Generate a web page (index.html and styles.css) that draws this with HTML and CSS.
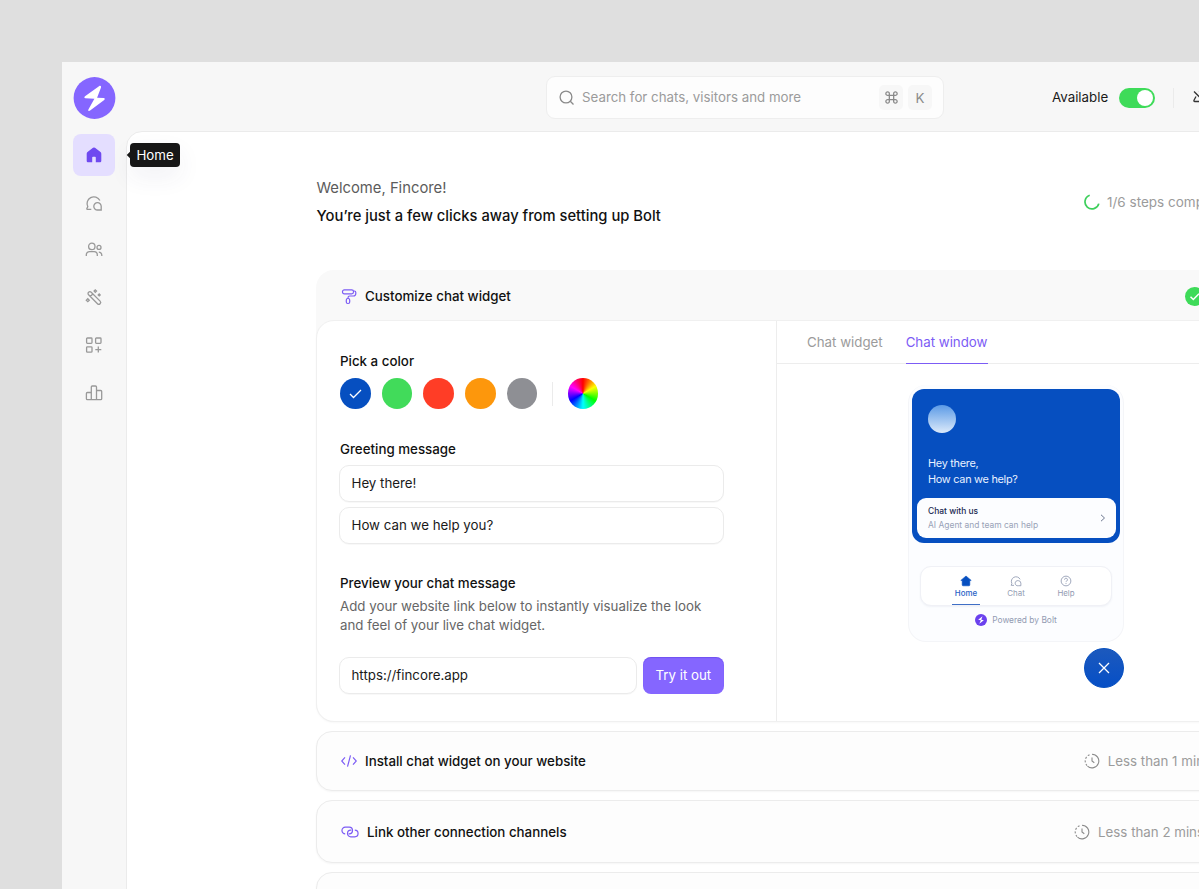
FILE: index.html
```html
<!DOCTYPE html>
<html lang="en">
<head>
<meta charset="UTF-8">
<title>Bolt - Home</title>
<link rel="stylesheet" href="styles.css">
</head>
<body>
<div class="app">
  <header class="topbar">
    <div class="logo">
      <svg width="43" height="42" viewBox="0 0 43 42"><circle cx="21.500" cy="21" r="20.900" fill="#8566ff"/><path d="M26 9.200 12 19.300c-1 .8-.8 1.900.4 2l9 .5-6 10.600c-.6 1.400.5 2 1.700 1.100L31.200 23c1-.8.7-1.900-.5-2l-6.600-.3 3.900-10.200c.4-1.500-.6-2.300-2-1.300z" fill="#fff"/></svg>
    </div>
    <div class="search">
      <svg class="search-icon" width="16" height="16" viewBox="0 0 16 16"><circle cx="7" cy="7" r="5.900"/><path d="M11.300 11.300 14.500 14.500"/></svg>
      <span class="search-text">Search for chats, visitors and more</span>
      <span class="key">
        <svg width="13" height="13" viewBox="0 0 12 12"><path d="M4 4h4v4H4zM4 4V2.500A1.600 1.600 0 1 0 2.500 4H4M8 4V2.500A1.600 1.600 0 1 1 9.500 4H8M4 8v1.500A1.600 1.600 0 1 1 2.500 8H4M8 8v1.500A1.600 1.600 0 1 0 9.500 8H8"/></svg>
      </span>
      <span class="key">K</span>
    </div>
    <div class="status">
      <span class="status-text">Available</span>
      <span class="toggle"><i></i></span>
      <span class="status-line"></span>
      <svg class="bell" width="18" height="18" viewBox="0 0 18 18"><path d="M2 2.500 15.500 16M4 7.500 2 11.200c-.3.800 0 1.300.8 1.300h9M7 3.200c3-1.700 7 .3 7 4.300 0 2 .5 3 1.500 4.500"/></svg>
    </div>
  </header>

  <div class="body">
    <nav class="sidebar">
      <a class="nav-item active">
        <svg width="16" height="16" viewBox="0 0 16 16"><path d="M7 .8a1.700 1.700 0 0 1 2 0l5.500 4.300c.5.400.8 1 .8 1.600V14a1.200 1.200 0 0 1-1.200 1.200h-4.300V10.500a.8.800 0 0 0-.8-.8H7a.8.800 0 0 0-.8.800v4.700H1.900A1.200 1.200 0 0 1 .7 14V6.700c0-.6.300-1.200.8-1.600z" fill="#6f49f0"/></svg>
        <span class="tooltip">Home</span>
      </a>
      <a class="nav-item">
        <svg width="18" height="18" viewBox="0 0 18 18"><path d="M6.300 15.300H2.300c-.5 0-.7-.5-.4-.9l.9-1.600A6.800 6.800 0 1 1 14.900 6.500"/><path d="M12.500 8.600a3.700 3.700 0 1 0 0 7.400h3.700v-3.700a3.700 3.700 0 0 0-3.700-3.700z"/></svg>
      </a>
      <a class="nav-item">
        <svg width="18" height="18" viewBox="0 0 18 18"><circle cx="6.800" cy="5.400" r="3.200"/><path d="M1.300 15v-1.200a3.200 3.200 0 0 1 3.200-3.200h4.600a3.200 3.200 0 0 1 3.200 3.200V15"/><circle cx="14" cy="6.400" r="2"/><path d="M13.800 11.200a3 3 0 0 1 3 3V15"/></svg>
      </a>
      <a class="nav-item">
        <svg width="18" height="18" viewBox="0 0 18 18"><path d="m3.600 3.200a1.800 1.800 0 0 1 2.600 0l8.900 8.900a1.800 1.800 0 0 1-2.600 2.600L3.600 5.800a1.800 1.800 0 0 1 0-2.600zM5.300 7.500l2.500-2.500"/><path d="m10.300.9 1.200 1.200-1.200 1.200-1.200-1.200zM14.200 4.900l1 1-1 1-1-1zM2.800 9.700l1.500 1.500-1.500 1.500-1.500-1.500z"/></svg>
      </a>
      <a class="nav-item">
        <svg width="18" height="18" viewBox="0 0 18 18"><rect x="1.600" y="2" width="5.400" height="5.400" rx=".8"/><rect x="10.600" y="2" width="5.400" height="5.400" rx=".8"/><rect x="1.600" y="10.800" width="5.400" height="5.400" rx=".8"/><path d="M13.300 10.600v6M10.300 13.600h6"/></svg>
      </a>
      <a class="nav-item">
        <svg width="18" height="18" viewBox="0 0 18 18"><path d="M6.300 15.700V3a1 1 0 0 1 1-1h3.200a1 1 0 0 1 1 1v12.700M6.300 8.500H2.400a1 1 0 0 0-1 1v5.200a1 1 0 0 0 1 1h13.300a1 1 0 0 0 1-1V7.500a1 1 0 0 0-1-1h-4.200"/></svg>
      </a>
    </nav>

    <main class="content">
      <div class="welcome">
        <div>
          <p class="hello">Welcome, Fincore!</p>
          <h1>You’re just a few clicks away from setting up Bolt</h1>
        </div>
        <div class="progress">
          <svg width="16" height="16" viewBox="0 0 16 16"><path d="M5.700 1.300A7 7 0 1 0 14.800 9.600"/></svg>
          <span>1/6 steps completed</span>
        </div>
      </div>

      <section class="step-open">
        <div class="step-head">
          <svg class="step-icon" width="16" height="17" viewBox="0 0 16 17"><rect x="1.500" y="1.800" width="11" height="4" rx="1.800"/><path d="M12.500 3h.8a1.500 1.500 0 0 1 1.500 1.500v1A2.500 2.500 0 0 1 12.300 8H8.800A1.800 1.800 0 0 0 7 9.800v.7"/><rect x="5.300" y="10.500" width="3.400" height="5" rx="1.500"/></svg>
          <h2>Customize chat widget</h2>
          <svg class="done" width="19" height="19" viewBox="0 0 19 19"><circle cx="9.500" cy="9.500" r="9.500" fill="#3edb59"/><path d="m5.500 9.800 2.800 2.700L14 6.800" fill="none" stroke="#fff" stroke-width="1.500"/></svg>
        </div>
        <div class="panel">
          <div class="form">
            <h3>Pick a color</h3>
            <div class="colors">
              <span class="dot blue"><svg width="13" height="10" viewBox="0 0 13 10"><path d="m1 5 3.500 3.500L12 1"/></svg></span>
              <span class="dot green"></span>
              <span class="dot red"></span>
              <span class="dot orange"></span>
              <span class="dot gray"></span>
              <span class="colors-line"></span>
              <span class="dot wheel"></span>
            </div>
            <h3 class="label-greeting">Greeting message</h3>
            <div class="input">Hey there!</div>
            <div class="input">How can we help you?</div>
            <h3 class="label-preview">Preview your chat message</h3>
            <p class="hint">Add your website link below to instantly visualize the look<br>and feel of your live chat widget.</p>
            <div class="link-row">
              <div class="input">https://fincore.app</div>
              <div class="button">Try it out</div>
            </div>
          </div>

          <div class="preview">
            <div class="tabs">
              <span class="tab">Chat widget</span>
              <span class="tab selected">Chat window</span>
            </div>
            <div class="widget">
              <div class="hero">
                <div class="avatar"></div>
                <p>Hey there,</p>
                <p>How can we help?</p>
                <div class="chat-card">
                  <div>
                    <strong>Chat with us</strong>
                    <span>AI Agent and team can help</span>
                  </div>
                  <svg width="6" height="8" viewBox="0 0 6 8"><path d="m1 .8 3.500 3.200L1 7.200"/></svg>
                </div>
              </div>
              <div class="widget-nav">
                <div class="widget-tab on">
                  <svg width="12" height="12" viewBox="0 0 12 12"><path d="M6 1 .8 5.400h1.400V10c0 .5.300.8.800.8h6c.5 0 .8-.3.800-.8V5.400h1.400z" fill="#064fc0" stroke="#064fc0" stroke-width=".6"/></svg>
                  Home
                </div>
                <div class="widget-tab">
                  <svg width="12" height="12" viewBox="0 0 18 18"><path d="M6 15.500H1.800l1-2.700A6.800 6.800 0 1 1 15.200 6.500"/><path d="M12.500 8.500a3.900 3.900 0 1 0 0 7.600h3.800v-3.900a3.900 3.900 0 0 0-3.800-3.700z"/></svg>
                  Chat
                </div>
                <div class="widget-tab">
                  <svg width="12" height="12" viewBox="0 0 18 18"><circle cx="9" cy="9" r="7.300"/><path d="M6.800 7a2.200 2.200 0 1 1 3.200 2c-.7.400-1 .8-1 1.600M9 12.200v1.300"/></svg>
                  Help
                </div>
              </div>
              <div class="powered">
                <svg width="12" height="12" viewBox="0 0 42 42"><circle cx="21" cy="21" r="21" fill="#6b41ee"/><path d="M26.300 8.200 11 20.500l9.500 1.700L15 34l16-12.500-9-1.700z" fill="#fff"/></svg>
                Powered by Bolt
              </div>
            </div>
            <div class="close">
              <svg width="12" height="12" viewBox="0 0 12 12"><path d="m1 1 10 10M11 1 1 11"/></svg>
            </div>
          </div>
        </div>
      </section>

      <section class="step">
        <svg class="step-icon" width="16" height="16" viewBox="0 0 16 16"><path d="M4 4.300.7 8 4 11.700M12 4.300 15.300 8 12 11.700M9.500 2.300l-3 11.400"/></svg>
        <h2>Install chat widget on your website</h2>
        <div class="time">
          <svg width="16" height="16" viewBox="0 0 16 16"><path d="M8 1.200a6.800 6.800 0 1 1-4.500 11.900M8 4.500V8l2.300 1.700"/><path d="M5.500 1.700A6.800 6.800 0 0 0 3 12.600" stroke-dasharray="2 1.700"/></svg>
          <span>Less than 1 min</span>
        </div>
      </section>

      <section class="step step-link">
        <svg class="step-icon" width="18" height="12" viewBox="0 0 18 12"><path d="M4.200 7.800A3.300 3.300 0 0 1 4.300 1.200h3.900a3.300 3.300 0 0 1 0 6.600H7.600"/><path d="M13.800 4.200a3.300 3.300 0 0 1-.1 6.600H9.800a3.300 3.300 0 0 1 0-6.600h.6"/></svg>
        <h2>Link other connection channels</h2>
        <div class="time">
          <svg width="16" height="16" viewBox="0 0 16 16"><path d="M8 1.200a6.800 6.800 0 1 1-4.500 11.900M8 4.500V8l2.300 1.700"/><path d="M5.500 1.700A6.800 6.800 0 0 0 3 12.600" stroke-dasharray="2 1.700"/></svg>
          <span>Less than 2 mins</span>
        </div>
      </section>

      <section class="step"></section>
    </main>
  </div>
</div>
</body>
</html>
```

FILE: styles.css
```css
* {
  box-sizing: border-box;
}

html {
  overflow: hidden;
}

body {
  margin: 0;
  padding: 62px 0 0 62px;
  height: 889px;
  overflow: hidden;
  background-color: #dfdfdf;
  color: #1a1a1a;
  font-family: Inter, "Liberation Sans", sans-serif;
  font-size: 13.3px;
}

h1, h2, h3, p {
  margin: 0;
}

svg {
  display: block;
  flex: none;
  fill: none;
}

.app {
  width: 1364px;
  height: 827px;
  overflow: hidden;
  background-color: #f7f7f7;
}

/* top bar */
.topbar {
  display: flex;
  height: 69px;
  padding-top: 14px;
}

.logo {
  margin: 1px 0 0 11px;
}

.search {
  display: flex;
  align-items: center;
  width: 398px;
  height: 43px;
  margin-left: 430px;
  padding: 0 12px;
  background-color: #fdfdfd;
  border: 1px solid #eeeeee;
  border-radius: 9px;
}

.search-icon {
  stroke: #8a8a8a;
  stroke-width: 1.3;
}

.search-text {
  flex: 1;
  margin-left: 7px;
  color: #9b9b9b;
  line-height: 16px;
  padding-bottom: 1px;
}

.key {
  display: flex;
  align-items: center;
  justify-content: center;
  width: 24px;
  height: 25px;
  margin-left: 5px;
  background-color: #f7f7f7;
  border-radius: 5px;
  color: #8a8a8a;
}

.key:last-child {
  margin-right: -1px;
}

.key svg {
  stroke: #8a8a8a;
  stroke-width: 1.2;
}

.status {
  display: flex;
  align-items: center;
  height: 43px;
  margin-left: 108px;
}

.status-text {
  width: 67px;
  padding-bottom: 1px;
}

.toggle {
  display: flex;
  justify-content: flex-end;
  width: 36px;
  height: 20px;
  padding: 2px;
  background-color: #3edb59;
  border-radius: 10px;
}

.toggle i {
  width: 16px;
  height: 16px;
  background-color: #fff;
  border-radius: 50%;
}

.status-line {
  width: 1px;
  height: 20px;
  margin-left: 18px;
  background-color: #ebebeb;
}

.bell {
  margin-left: 18px;
  stroke: #333;
  stroke-width: 1.3;
}

.body {
  display: flex;
}

/* sidebar */
.sidebar {
  display: flex;
  flex-direction: column;
  gap: 5.5px;
  width: 64px;
  padding: 3px 0 0 11.4px;
}

.nav-item {
  position: relative;
  display: flex;
  align-items: center;
  justify-content: center;
  width: 42px;
  height: 42px;
  border-radius: 8px;
}

.nav-item > svg {
  stroke: #999;
  stroke-width: 1.3;
}

.nav-item.active {
  background-color: #e4deff;
}

.nav-item.active > svg {
  stroke: none;
}

.tooltip {
  position: absolute;
  left: 57px;
  top: 9px;
  z-index: 1;
  height: 24px;
  padding: 0 6px;
  background-color: #171717;
  border-radius: 4px;
  box-shadow: 0 10px 24px rgba(60,50,120,0.07);
  color: #fff;
  line-height: 24px;
}

.tooltip::before {
  content: "";
  position: absolute;
  left: -2px;
  top: 9px;
  width: 6px;
  height: 6px;
  background-color: #171717;
  transform: rotate(45deg);
}

/* content */
.content {
  flex: 1;
  height: 830px;
  padding: 47px 190px 0 189px;
  background-color: #fff;
  border: 1px solid #ebebeb;
  border-radius: 16px 0 0 0;
}

.welcome {
  display: flex;
  justify-content: space-between;
  height: 91px;
}

.hello {
  margin-left: 0.5px;
  font-size: 14.8px;
  line-height: 18px;
  color: #5c5c5c;
}

h1 {
  margin: 9px 0 0 0.5px;
  font-size: 14.75px;
  font-weight: 500;
  line-height: 20px;
  color: #111;
}

.progress {
  display: flex;
  align-items: center;
  gap: 7px;
  width: 151px;
  height: 20px;
  margin-top: 13px;
  font-size: 13.5px;
  color: #9b9b9b;
  white-space: nowrap;
}

.progress svg {
  stroke: #3ecf5c;
  stroke-width: 1.7;
}

h2, h3 {
  font-size: 13.33px;
  font-weight: 500;
  line-height: 18px;
  color: #111;
}

.step-open {
  background-color: #f9f9f9;
  border-radius: 18px;
}

.step-head {
  display: flex;
  align-items: center;
  height: 50px;
  padding: 2px 0 0 25px;
}

.step-icon {
  margin-right: 8px;
  stroke: #7c5cf5;
  stroke-width: 1.2;
}

.done {
  margin-left: auto;
  margin-right: 31px;
}

.panel {
  display: flex;
  height: 402px;
  background-color: #fff;
  border: 1px solid #f0f0f0;
  border-radius: 18px;
  box-shadow: 0 1px 2px rgba(0,0,0,0.03);
}

.form {
  width: 460px;
  padding: 31px 52px 0 23px;
  border-right: 1px solid #ededed;
}

.colors {
  display: flex;
  align-items: center;
  gap: 11.1px;
  margin-top: 8px;
}

.dot {
  display: flex;
  align-items: center;
  justify-content: center;
  width: 30.6px;
  height: 31px;
  border-radius: 50%;
}

.dot svg {
  stroke: #fff;
  stroke-width: 1.3;
}

.blue { background-color: #064fc0; }
.green { background-color: #41db5a; }
.red { background-color: #ff3d26; }
.orange { background-color: #fd970c; }
.gray { background-color: #8e8f94; }
.wheel { background: conic-gradient(red, yellow, lime, cyan, blue, magenta, red); }

.colors-line {
  width: 1px;
  height: 24px;
  margin: 0 3.5px;
  background-color: #ebebeb;
}

.label-greeting {
  margin: 31px 0 7px;
}

.input {
  height: 37px;
  margin: 0 0 5px -1px;
  padding-left: 11.5px;
  background-color: #fff;
  border: 1px solid #ebebeb;
  border-radius: 10px;
  box-shadow: 0 1px 1px rgba(0,0,0,0.03);
  line-height: 35px;
}

.label-preview {
  margin-top: 30px;
}

.hint {
  margin-top: 5px;
  line-height: 19px;
  color: #666;
  white-space: nowrap;
}

.link-row {
  display: flex;
  gap: 6px;
  margin-top: 22px;
}

.link-row .input {
  flex: 1;
}

.button {
  width: 81.4px;
  height: 37px;
  background-color: #8566ff;
  border-radius: 8px;
  box-shadow: inset 0 1px 1px rgba(80,50,220,0.4);
  color: #fff;
  line-height: 36px;
  text-align: center;
}

/* preview */
.preview {
  flex: 1;
  display: flex;
  flex-direction: column;
}

.tabs {
  display: flex;
  gap: 23px;
  height: 43px;
  padding-left: 30px;
  border-bottom: 1px solid #ededed;
}

.tab {
  height: 43px;
  line-height: 42px;
  color: #9b9b9b;
}

.tab.selected {
  border-bottom: 1px solid #7c5cf5;
  color: #7c5cf5;
}

.widget {
  width: 216px;
  height: 257px;
  margin: 21px 0 0 131px;
  padding: 4px 3px 0;
  background-color: #fcfdff;
  border: 1px solid #f4f5f8;
  border-top: 0;
  border-radius: 18px;
}

.hero {
  height: 154px;
  padding: 16px 4px 0 5px;
  background-color: #064fc0;
  border-radius: 12px;
  color: #e8f1ff;
}

.avatar {
  width: 28px;
  height: 28px;
  margin: 0 0 23px 11px;
  background: linear-gradient(#5b9ae6, #dceafa);
  border-radius: 50%;
}

.hero p {
  margin-left: 11px;
  font-size: 10.9px;
  line-height: 15.5px;
  letter-spacing: -0.28px;
}

.chat-card {
  display: flex;
  align-items: center;
  justify-content: space-between;
  height: 40px;
  margin-top: 11px;
  padding: 0 10px 0 11px;
  background-color: #fcfdff;
  border-radius: 9px;
}

.chat-card strong,
.chat-card span {
  display: block;
  font-size: 8.45px;
  font-weight: 500;
  line-height: 14px;
  color: #1b2a52;
}

.chat-card span {
  font-weight: 400;
  color: #9aa3b8;
}

.chat-card svg {
  stroke: #6d7890;
  stroke-width: 1;
}

.widget-nav {
  display: flex;
  justify-content: center;
  gap: 22px;
  height: 40px;
  margin: 23px 8px 0;
  background-color: #fff;
  border: 1px solid #f0f1f6;
  border-radius: 11px;
  box-shadow: 0 1px 2px rgba(50,60,120,0.06);
}

.widget-tab {
  display: flex;
  flex-direction: column;
  align-items: center;
  gap: 1px;
  width: 28px;
  padding-top: 8px;
  font-size: 7.9px;
  line-height: 10px;
  color: #929bb2;
}

.widget-tab svg {
  stroke: #929bb2;
  stroke-width: 1.3;
}

.widget-tab.on {
  border-bottom: 1px solid #3f6fc6;
  font-weight: 500;
  color: #2862c6;
}

.powered {
  display: flex;
  align-items: center;
  justify-content: center;
  gap: 5px;
  margin-top: 8px;
  font-size: 8.4px;
  line-height: 12px;
  color: #929bb2;
}

.close {
  display: flex;
  align-items: center;
  justify-content: center;
  width: 40px;
  height: 40px;
  margin: 6px 0 0 307px;
  background: linear-gradient(#1c59bd, #064fc6);
  border: 1px solid #064fc0;
  border-radius: 50%;
}

.close svg {
  stroke: #fff;
  stroke-width: 1.3;
}

/* closed steps */
.step {
  display: flex;
  align-items: center;
  height: 60px;
  margin-top: 9px;
  padding: 0 30px 0 24px;
  background-color: #fdfdfd;
  border: 1px solid #ececec;
  border-radius: 16px;
  box-shadow: 0 1px 2px rgba(0,0,0,0.04);
}

.step-link {
  height: 63px;
}

.time {
  display: flex;
  align-items: center;
  gap: 8px;
  margin-left: auto;
  color: #9b9b9b;
}

.time svg {
  stroke: #8a8a8a;
  stroke-width: 1.1;
}
```
